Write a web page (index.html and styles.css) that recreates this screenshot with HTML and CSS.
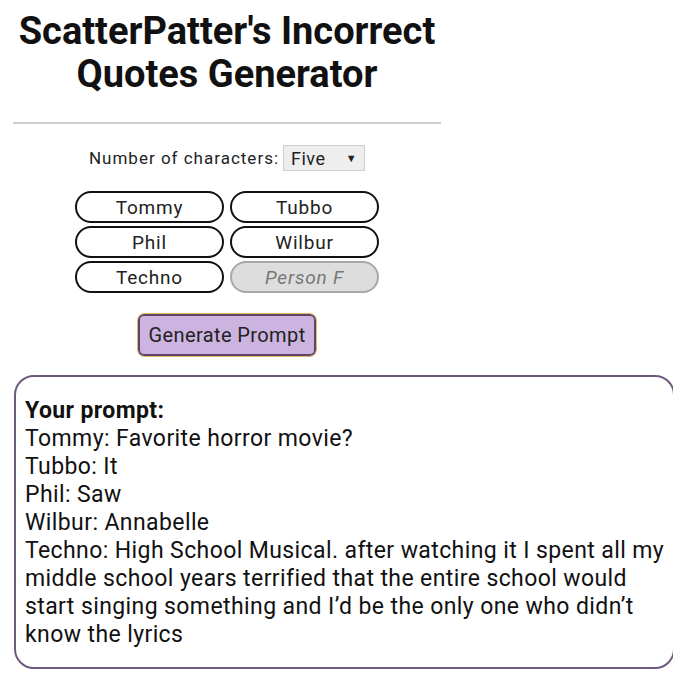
FILE: index.html
```html
<!DOCTYPE html>
<html lang="en">
<head>
<meta charset="UTF-8">
<title>ScatterPatter's Incorrect Quotes Generator</title>
<link rel="stylesheet" href="styles.css">
</head>
<body>

<div id="header">
    <h1>ScatterPatter's Incorrect Quotes Generator</h1>
    <hr>

    <div id="countRow">
        <label for="count">Number of characters:</label>
        <div class="select" id="count">Five <span class="arrow">&#9660;</span></div>
    </div>

    <div id="names">
        <input class="name" type="text" value="Tommy">
        <input class="name" type="text" value="Tubbo">
        <input class="name" type="text" value="Phil">
        <input class="name" type="text" value="Wilbur">
        <input class="name" type="text" value="Techno">
        <input class="name" type="text" placeholder="Person F" disabled>
    </div>

    <div id="actions">
        <button id="generateBtn">Generate Prompt</button>
    </div>
</div>

<div id="output">
    <b>Your prompt:</b><br>
    Tommy: Favorite horror movie?<br>
    Tubbo: It<br>
    Phil: Saw<br>
    Wilbur: Annabelle<br>
    Techno: High School Musical. after watching it I spent all my middle school years terrified that the entire school would start singing something and I’d be the only one who didn’t know the lyrics
</div>

</body>
</html>
```

FILE: styles.css
```css
html, body {
    margin: 0;
    padding: 0;
}
body {
    font-family: Roboto, "Noto Sans", sans-serif;
    color: #111;
    background: #fff;
    overflow: hidden;
    width: 673px;
    height: 683px;
}
#header {
    width: 428px;
    margin-left: 13px;
    text-align: center;
}
h1 {
    font-size: 38px;
    line-height: 43px;
    font-weight: bold;
    margin: 0;
    padding-top: 10px;
}
hr {
    border: none;
    border-top: 2px solid #d0d0d0;
    margin: 26px 0 0 0;
}
#countRow {
    display: flex;
    justify-content: center;
    align-items: center;
    gap: 6px;
    margin-top: 21px;
    font-size: 17px;
    letter-spacing: 1px;
    color: #222;
}
.select {
    width: 82px;
    height: 26px;
    box-sizing: border-box;
    border: 1px solid #cfcfcf;
    background: #eeeeee;
    display: flex;
    align-items: center;
    justify-content: space-between;
    padding: 0 7px;
    font-size: 18px;
    letter-spacing: 0.5px;
    margin-left: -2px;
}
.arrow {
    font-size: 11px;
}
#names {
    display: grid;
    grid-template-columns: 149px 149px;
    justify-content: center;
    column-gap: 6px;
    row-gap: 3px;
    margin-top: 20px;
}
.name {
    height: 32px;
    box-sizing: border-box;
    border: 2px solid #111;
    border-radius: 16px;
    background: #fff;
    font-family: Roboto, sans-serif;
    font-size: 19px;
    letter-spacing: 0.8px;
    color: #222;
    text-align: center;
    padding: 0;
    width: 100%;
}
.name:disabled {
    background: #dddddd;
    border-color: #a8a8a8;
}
.name::placeholder {
    font-style: italic;
    color: #777;
}
#actions {
    margin-top: 21px;
}
#generateBtn {
    font-family: Roboto, sans-serif;
    font-size: 20px;
    letter-spacing: 0.4px;
    color: #222;
    background: #cdb3e0;
    border: 2px solid #5e4468;
    border-radius: 6px;
    outline: 1px solid #e2b860;
    outline-offset: 0;
    width: 178px;
    height: 42px;
    padding: 0;
}
#output {
    margin: 19px 0 0 14px;
    width: 661px;
    box-sizing: border-box;
    border: 2px solid #6e5a80;
    border-radius: 20px;
    padding: 20px 2px 18px 9px;
    font-size: 23px;
    letter-spacing: 0.4px;
    line-height: 28px;
    color: #111;
}
```
